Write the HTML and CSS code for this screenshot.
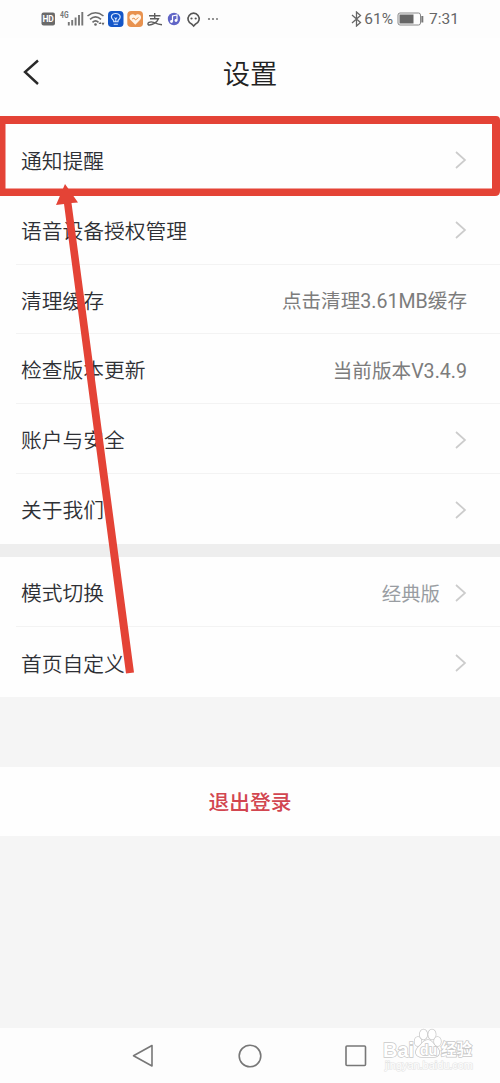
FILE: index.html
```html
<!DOCTYPE html>
<html lang="zh-CN">
<head>
<meta charset="utf-8">
<title>设置</title>
<link rel="stylesheet" href="styles.css">
</head>
<body>
<div class="screen">
  <div class="status">
    <svg class="status-left" width="190" height="24" viewBox="0 0 190 24">
      <rect x="1.500" y="6.500" width="13.500" height="13" rx="2" fill="#6a6a6a"/>
      <text class="hd" x="2.600" y="16.400" textLength="11.300">HD</text>
      <text class="g4" x="20" y="11.800" textLength="8.500" lengthAdjust="spacingAndGlyphs">4G</text>
      <path d="M28.800 19.500v-3.500M32.200 19.500v-5.500M35.600 19.500v-8M39 19.500V9M42.300 19.500V6" stroke="#777" stroke-width="1.900"/>
      <g fill="none" stroke="#6c6c6c" stroke-width="1.600">
        <path d="M47.500 10Q55.500 3.500 63.500 10M50 13.300Q55.500 8.500 61 13.300M52.500 16.300Q55.500 13.600 58.500 16.300"/>
      </g>
      <path d="M58.500 18l1.700-2.200 1.300 2.200zM61.500 16.800h3l-1.500 2.700z" fill="#666"/>
      <circle cx="55.500" cy="18.500" r="1.300" fill="#666"/>
      <rect x="68" y="5" width="15.500" height="16" rx="3.800" fill="#1456c8"/>
      <path d="M73.700 15.800v-1.300C69.500 11 71.500 7.500 75.700 7.500s6.400 3.500 2.300 7v1.300zM73.700 18.300h4.200M74.500 11.500l1.300 1.500 1.300-1.500M75.800 13v2.500" fill="none" stroke="#d9e8ff" stroke-width="1.100"/>
      <rect x="87.300" y="5" width="15.700" height="16" rx="3.800" fill="#e8924f"/>
      <path d="M95.300 18.800L90.300 13.800C87.700 10 92 6 95.300 9.500C98.500 6 103 10 100.200 13.800Z" fill="#fff4e8"/>
      <path d="M92 13l2-1 1.500 2 3-2.500" fill="none" stroke="#e8924f"/>
      <path d="M109 9.700h11.500M114.700 7v5.700M110 12.700h8.500C117 16.500 112 19.500 108.500 19C106.500 17 110 15 113.500 16.300C116.500 17.500 119 18.500 122 18.700" fill="none" stroke="#5c5c5c" stroke-width="1.400"/>
      <circle cx="134" cy="13" r="6.200" fill="#6065c6"/>
      <path d="M132.500 15.500V10l4.500-1v5.500" fill="none" stroke="#fff" stroke-width="1.200"/>
      <circle cx="131.500" cy="15.500" r="1.400" fill="#fff"/><circle cx="136" cy="14.500" r="1.400" fill="#fff"/>
      <path d="M153.600 20l-2-2A5.600 5.600 0 1 1 155.600 18Z" fill="none" stroke="#555" stroke-width="1.600"/>
      <circle cx="151.500" cy="12.500" r="1.100" fill="#555"/><circle cx="155.700" cy="12.500" r="1.100" fill="#555"/>
      <g fill="#777"><circle cx="169" cy="13" r="1.100"/><circle cx="173" cy="13" r="1.100"/><circle cx="177" cy="13" r="1"/></g>
    </svg>
    <div class="status-right">
      <svg width="11" height="16" viewBox="0 0 11 16"><path d="M1 4l8.500 7.500L5.500 15V1l4 3.500L1 12" fill="none" stroke="#666" stroke-width="1.300"/></svg>
      <span class="percent">61%</span>
      <svg class="battery" width="28" height="14" viewBox="0 0 28 14"><rect x="1" y="1" width="22.500" height="12" rx="2" fill="none" stroke="#888"/><rect x="2.500" y="2.500" width="14" height="9" fill="#666"/><path d="M25.300 4v6.500" stroke="#777" stroke-width="2"/></svg>
      <span>7:31</span>
    </div>
  </div>
  <header class="header">
    <svg class="back" width="20" height="28" viewBox="0 0 20 28"><path d="M16 2.500L3 14 16 26" fill="none" stroke="#292929" stroke-width="2.400"/></svg>
    <h1 class="title">设置</h1>
  </header>
  <main>
    <section class="group">
      <div class="row"><span>通知提醒</span><svg class="chevron" viewBox="0 0 12 18"><path d="M1 1l9 8-9 8"/></svg></div>
      <div class="row"><span>语音设备授权管理</span><svg class="chevron" viewBox="0 0 12 18"><path d="M1 1l9 8-9 8"/></svg></div>
      <div class="row"><span>清理缓存</span><span class="value">点击清理3.61MB缓存</span></div>
      <div class="row"><span>检查版本更新</span><span class="value">当前版本V3.4.9</span></div>
      <div class="row"><span>账户与安全</span><svg class="chevron" viewBox="0 0 12 18"><path d="M1 1l9 8-9 8"/></svg></div>
      <div class="row"><span>关于我们</span><svg class="chevron" viewBox="0 0 12 18"><path d="M1 1l9 8-9 8"/></svg></div>
    </section>
    <section class="group group-second">
      <div class="row"><span>模式切换</span><span class="value mode">经典版</span><svg class="chevron" viewBox="0 0 12 18"><path d="M1 1l9 8-9 8"/></svg></div>
      <div class="row"><span>首页自定义</span><svg class="chevron" viewBox="0 0 12 18"><path d="M1 1l9 8-9 8"/></svg></div>
    </section>
    <div class="logout">退出登录</div>
  </main>
  <nav class="nav">
    <svg width="22" height="24" viewBox="0 0 22 24"><path d="M20 1.500v20.500L1.500 11.800Z"/></svg>
    <svg width="24" height="24" viewBox="0 0 24 24"><circle cx="12" cy="12" r="10.800"/></svg>
    <svg width="22" height="22" viewBox="0 0 22 22"><rect x="1" y="1" width="19.500" height="19.500" rx="1"/></svg>
  </nav>
  <svg class="watermark" width="100" height="50" viewBox="0 0 100 50">
    <g class="mark">
      <text class="bai" x="2" y="29.500" textLength="31" lengthAdjust="spacingAndGlyphs">Bai</text>
      <text class="jingyan" x="60" y="28">经验</text>
      <ellipse cx="37" cy="14.500" rx="3.400" ry="4.500"/><ellipse cx="42.500" cy="7.500" rx="3.700" ry="4.900"/><ellipse cx="51" cy="7.500" rx="3.700" ry="4.900"/><ellipse cx="56.500" cy="14.500" rx="3.400" ry="4.500"/>
      <path d="M47 13c4 0 5 4 8 6.500 6 5 3 11-3 10.500h-11c-7 0-8-6-3-10.500C41 17 42.500 13 47 13Z"/>
      <text class="du" x="39" y="28">du</text>
      <text class="url" x="4" y="41.500" textLength="88">jingyan.baidu.com</text>
    </g>
  </svg>
  <svg class="annotation" width="500" height="700" viewBox="0 0 500 700">
    <path fill-rule="evenodd" d="M0 116H496Q500 116 500 120V191Q500 196 495 196H0ZM5.500 124V188.500H492V124Z"/>
    <path d="M65 184L78 202.500 71.500 203 134 672.500 126 673.500 64 204 56 205Z"/>
  </svg>
</div>
</body>
</html>
```
FILE: styles.css
```css
* { box-sizing: border-box; }
body { margin: 0; font-family: Roboto, "Noto Sans CJK SC", sans-serif; }
.screen { position: relative; height: 1083px; overflow: hidden; display: flex; flex-direction: column; background: #f5f5f5; }
.status { height: 38px; flex: none; display: flex; justify-content: space-between; padding: 6px 41px 8px 40px; background: #fdfdfd; }
.status-right { display: flex; align-items: center; padding-top: 2px; font-size: 15.5px; color: #666; }
.percent { margin-left: 2px; }
.battery { margin: 0 4px; }
.hd { font: bold 8.5px Roboto, sans-serif; fill: #fff; }
.g4 { font: bold 8.5px Roboto, sans-serif; fill: #777; }
.header { height: 87px; flex: none; display: flex; align-items: flex-start; background: #fefefe; padding-top: 20px; }
.back { margin: 0 0 0 22px; }
.title { flex: 1; margin: 1px 42px 0 0; text-align: center; font-size: 27.3px; line-height: 32px; font-weight: 350; color: #222; }
.group { background: #fefefe; }
.group-second { margin-top: 13px; box-shadow: 0 -13px #eee; }
.row { height: 69.83px; display: flex; align-items: center; margin-left: 16px; padding: 1px 33px 0 5px; font-size: 20.75px; font-weight: 350; color: #2e3035; border-bottom: 1px solid #f3f3f3; }
.row:last-child { border-bottom: 0; padding-top: 0; }
.row > :nth-child(2) { margin-left: auto; }
.value { font-size: 19.6px; font-weight: 400; color: #7c7c7c; }
.mode { font-size: 19.4px; color: #999da2; }
.mode + .chevron { margin-left: 15px; }
.chevron { width: 12px; height: 18px; margin-top: 1px; fill: none; stroke: #ccc; stroke-width: 1.7; }
.group-second .row { padding-top: 2px; }
.logout { margin-top: 70px; height: 69px; padding-top: 2px; line-height: 69px; background: #fefefe; text-align: center; font-size: 20.75px; font-weight: 500; color: #d24650; }
.nav { margin-top: auto; height: 55px; flex: none; background: #fdfdfd; display: flex; align-items: center; justify-content: space-between; padding: 0 133px 0 132px; }
.nav svg { fill: none; stroke: #777; stroke-width: 1.6; stroke-linejoin: round; }
.watermark { position: absolute; left: 381px; top: 1027px; }
.mark { fill: #fff; stroke: #c8c8c8; stroke-width: 1.5; paint-order: stroke; }
.bai { font: bold 21px "Liberation Sans", sans-serif; }
.du { font: bold 14px "Liberation Sans", sans-serif; }
.jingyan { font: bold 15.5px "Noto Sans CJK SC", sans-serif; }
.url { font: 11px "Liberation Sans", sans-serif; stroke: #e4e4e4; stroke-width: 1.2; }
.annotation { position: absolute; left: 0; top: 0; fill: #e44336; }
```
